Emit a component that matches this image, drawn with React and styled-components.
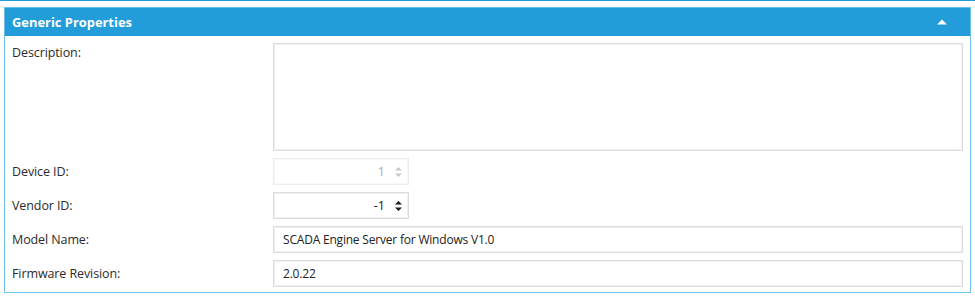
import React from "react";
import styled, { createGlobalStyle } from "styled-components";

const GlobalStyle = createGlobalStyle`
  body {
    margin: 0;
    background: #ffffff;
    font-family: "Open Sans", "Noto Sans", sans-serif;
  }
`;

const TopLine = styled.div`
  height: 1px;
  background: #229dda;
`;

const Panel = styled.section`
  box-sizing: border-box;
  width: 967px;
  margin: 6px 0 0 4px;
  border: 1px solid #6cc0ea;
`;

const Header = styled.div`
  display: flex;
  align-items: center;
  justify-content: space-between;
  height: 28px;
  padding: 0 23px 0 7px;
  background: #229dda;
  color: #ffffff;
  font-size: 12.9px;
  font-weight: 700;
`;

const Body = styled.div`
  display: grid;
  grid-template-columns: 261px 1fr;
  row-gap: 7px;
  padding: 7px 7px 5px 7px;
`;

const Label = styled.div`
  display: flex;
  align-items: ${(p) => (p.$top ? "flex-start" : "center")};
  padding-top: ${(p) => (p.$top ? "1px" : "0")};
  font-size: 12.5px;
  color: #2b2b2b;
  letter-spacing: -0.1px;
`;

const TextArea = styled.div`
  box-sizing: border-box;
  height: 108px;
  border: 1px solid #dcdcdc;
  box-shadow: inset 0 0 0 1px #f0f0f0;
`;

const TextBox = styled.div`
  box-sizing: border-box;
  height: 27px;
  display: flex;
  align-items: center;
  padding-left: 9px;
  border: 1px solid #dcdcdc;
  box-shadow: inset 0 0 0 1px #f0f0f0;
  font-size: 12px;
  color: #222;
  letter-spacing: -0.2px;
`;

const NumberBox = styled.div`
  box-sizing: border-box;
  width: 136px;
  height: 27px;
  display: flex;
  align-items: center;
  justify-content: flex-end;
  gap: 9px;
  padding-right: 5px;
  border: 1px solid ${(p) => (p.$disabled ? "#ececec" : "#dcdcdc")};
  box-shadow: inset 0 0 0 1px ${(p) => (p.$disabled ? "#f7f7f7" : "#f0f0f0")};
  font-size: 12.5px;
  color: ${(p) => (p.$disabled ? "#a8a8a8" : "#222")};
`;

const Spinner = ({ color }) => (
  <svg width="9" height="16" viewBox="0 0 9 16">
    <path d="M1 6.5 L4.5 3 L8 6.5 Z" fill={color} />
    <path d="M1 9.5 L4.5 13 L8 9.5 Z" fill={color} />
  </svg>
);

const Caret = () => (
  <svg width="10" height="6" viewBox="0 0 10 6">
    <path d="M0 5.5 L5 0.5 L10 5.5 Z" fill="#ffffff" />
  </svg>
);

export default function App() {
  return (
    <>
      <GlobalStyle />
      <TopLine />
      <Panel>
        <Header>
          <span>Generic Properties</span>
          <Caret />
        </Header>
        <Body>
          <Label $top>Description:</Label>
          <TextArea />

          <Label>Device ID:</Label>
          <NumberBox $disabled>
            <span>1</span>
            <Spinner color="#c8c8c8" />
          </NumberBox>

          <Label>Vendor ID:</Label>
          <NumberBox>
            <span>-1</span>
            <Spinner color="#1a1a1a" />
          </NumberBox>

          <Label>Model Name:</Label>
          <TextBox>SCADA Engine Server for Windows V1.0</TextBox>

          <Label>Firmware Revision:</Label>
          <TextBox>2.0.22</TextBox>
        </Body>
      </Panel>
    </>
  );
}
